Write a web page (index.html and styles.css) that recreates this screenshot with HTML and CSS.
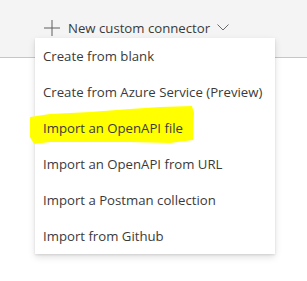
FILE: index.html
```html
<!DOCTYPE html>
<html lang="en">
<head>
  <meta charset="UTF-8" />
  <title>New custom connector</title>
  <link rel="stylesheet" href="styles.css">
</head>
<body>
  <!-- Command bar -->
  <div class="command-bar">
    <button class="new-btn">
      <svg class="plus" width="16" height="16" viewBox="0 0 16 16">
        <path d="M8 0v16M0 8h16" stroke="#5f5f5f" stroke-width="1" fill="none" />
      </svg>
      <span class="new-label">New custom connector</span>
      <svg class="chevron" width="12" height="7" viewBox="0 0 12 7">
        <path d="M0.5 0.5l5.5 5.5 5.5-5.5" stroke="#6a6a6a" stroke-width="1" fill="none" />
      </svg>
    </button>
  </div>

  <!-- Dropdown menu -->
  <div class="menu">
    <div class="highlight">
      <svg width="170" height="42" viewBox="0 0 170 42">
        <path d="M0 12 L20 9 L60 7 L100 4 L130 2 L162 1 L164 8 L163 35 L140 38 L100 37 L60 37 L20 37 L4 39 L0 32 Z" fill="#ffff00" />
      </svg>
    </div>
    <div class="menu-item">Create from blank</div>
    <div class="menu-item">Create from Azure Service (Preview)</div>
    <div class="menu-item">Import an OpenAPI file</div>
    <div class="menu-item">Import an OpenAPI from URL</div>
    <div class="menu-item">Import a Postman collection</div>
    <div class="menu-item">Import from Github</div>
  </div>
</body>
</html>
```

FILE: styles.css
```css
* {
  margin: 0;
  padding: 0;
  box-sizing: border-box;
}

body {
  font-family: 'Open Sans', 'Noto Sans', sans-serif;
  background: #fff;
  width: 307px;
  height: 281px;
  position: relative;
  overflow: hidden;
  color: #3b3a39;
}

/* Top command bar */
.command-bar {
  height: 58px;
  background: #f4f4f4;
  border-bottom: 1px solid #c6c6c6;
  padding: 18px 0 0 44px;
}

.new-btn {
  display: flex;
  align-items: center;
  height: 20px;
  background: none;
  border: none;
  font-family: inherit;
  font-size: 13.2px;
  color: #3b3a39;
  cursor: pointer;
}

.plus {
  margin-right: 8px;
}

.chevron {
  margin-left: 7px;
  margin-top: -2px;
}

/* Dropdown */
.menu {
  position: absolute;
  top: 38px;
  left: 35px;
  width: 240px;
  background: #fff;
  box-shadow: 0 3px 7px rgba(0, 0, 0, 0.13), 0 1px 2px rgba(0, 0, 0, 0.1);
}

.menu-item {
  position: relative;
  height: 36px;
  line-height: 36px;
  padding-left: 8px;
  font-size: 13.2px;
  color: #3b3a39;
  white-space: nowrap;
}

/* Marker annotation over the third item */
.highlight {
  position: absolute;
  left: -5px;
  top: 67px;
  line-height: 0;
}
```
